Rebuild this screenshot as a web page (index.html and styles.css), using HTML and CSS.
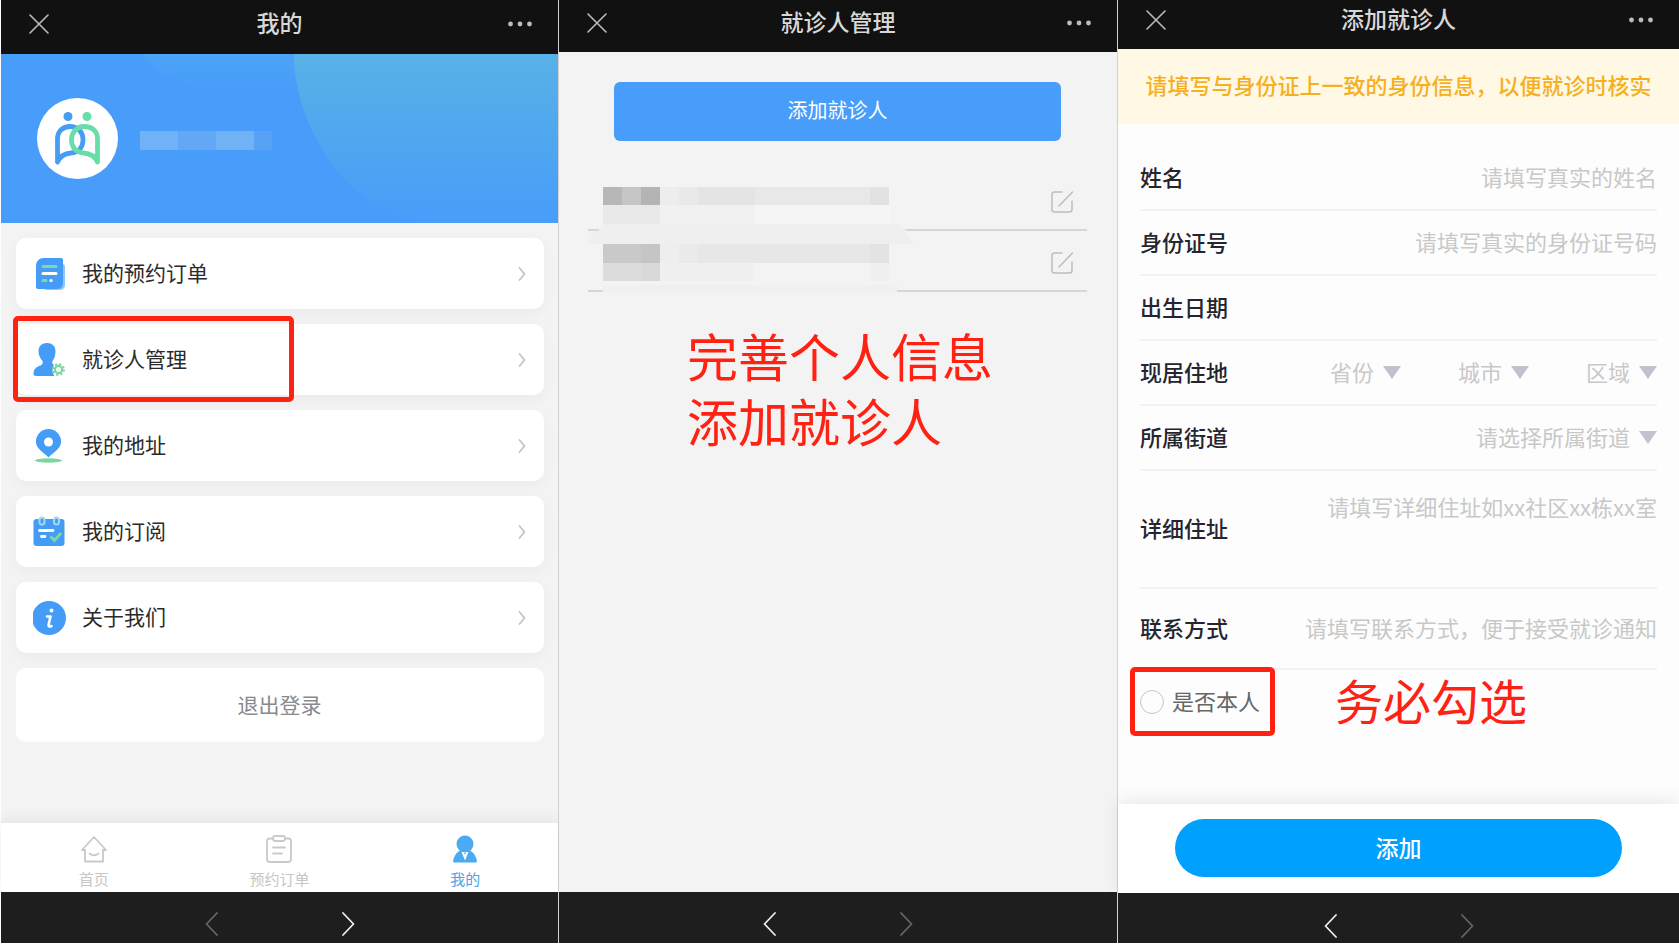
FILE: index.html
```html
<!DOCTYPE html>
<html lang="zh-CN">
<head>
<meta charset="utf-8">
<title>就诊人管理</title>
<link rel="stylesheet" href="styles.css">
</head>
<body>
<svg class="defs" aria-hidden="true">
  <symbol id="close" viewBox="0 0 20 20"><path d="M1 1 19 19M19 1 1 19" fill="none" stroke="currentColor" stroke-width="1.6" stroke-linecap="round"/></symbol>
  <symbol id="dots" viewBox="0 0 24 6"><circle cx="2.5" cy="3" r="2.4"/><circle cx="12" cy="3" r="2.4"/><circle cx="21.5" cy="3" r="2.4"/></symbol>
  <symbol id="prev" viewBox="0 0 13 24"><path d="M12 1 1.500 12 12 23" fill="none" stroke="currentColor" stroke-width="1.8" stroke-linecap="round" stroke-linejoin="round"/></symbol>
  <symbol id="next" viewBox="0 0 13 24"><path d="M1 1 11.500 12 1 23" fill="none" stroke="currentColor" stroke-width="1.8" stroke-linecap="round" stroke-linejoin="round"/></symbol>
  <symbol id="chev" viewBox="0 0 8 14"><path d="M1.500 1 6.500 7 1.500 13" fill="none" stroke="#c4c4c4" stroke-width="1.8" stroke-linecap="round" stroke-linejoin="round"/></symbol>
  <symbol id="edit" viewBox="0 0 24 24"><path d="M12 2H4.500A2.500 2.500 0 0 0 2 4.500v15A2.500 2.500 0 0 0 4.500 22h15a2.500 2.500 0 0 0 2.500-2.500V11M22.500 2 9 16" fill="none" stroke="#bdbdbd" stroke-width="1.5" stroke-linecap="round"/></symbol>
</svg>
<div class="board">

  <section class="phone phone-me">
    <header class="bar">
      <button class="ghost" aria-label="关闭"><svg class="i-close"><use href="#close"/></svg></button>
      <h1>我的</h1>
      <button class="ghost" aria-label="更多"><svg class="i-dots"><use href="#dots"/></svg></button>
    </header>
    <div class="banner">
      <svg class="banner-art" viewBox="0 0 557 170" preserveAspectRatio="none">
        <defs>
          <linearGradient id="g1" x1="0" y1="0" x2="0" y2="1"><stop offset="0" stop-color="#58b1e6"/><stop offset="1" stop-color="#479df9"/></linearGradient>
          <linearGradient id="g2" x1="0" y1="0" x2="0" y2="1"><stop offset="0" stop-color="#4ca3f7"/><stop offset="1" stop-color="#479df9"/></linearGradient>
        </defs>
        <path d="M142 0H300V38C240 44 160 36 142 0Z" fill="url(#g2)"/>
        <path d="M293 0C292 50 322 118 372 150C392 162 410 168 440 170H557V0Z" fill="url(#g1)"/>
      </svg>
      <svg class="avatar" viewBox="0 0 81 81">
        <circle cx="40.500" cy="40.500" r="40.500" fill="#fff"/>
        <g fill="none" stroke-width="4.800" stroke-linejoin="round">
          <path stroke="#479df6" d="M20.500 64V41C20.500 33 26 28.500 33 28.500C41 28.500 46 34 46 42C46 50 41 54.500 34 55C27 55.500 23 58 20.500 64Z"/>
          <path stroke="#68dda5" d="M60.500 64V41C60.500 33 55 28.500 47.500 28.500C40 28.500 34.500 34 34.500 42C34.500 50 40 54.500 46.500 55C53.500 55.500 58 58 60.500 64Z"/>
        </g>
        <circle cx="31" cy="18.500" r="4.500" fill="#479df6"/><circle cx="50" cy="18.500" r="4.500" fill="#68dda5"/>
      </svg>
      <svg class="mask" viewBox="0 0 132 19"><path fill="#71b1f5" d="M0 0h38v19H0z"/><path fill="#62a8f5" d="M38 0h38v19H38z"/><path fill="#70b2f3" d="M76 0h38v19H76z"/><path fill="#57a2f5" d="M114 0h18v19h-18z"/></svg>
    </div>
    <nav class="menu">
      <a class="card" href="#orders">
        <svg class="i-menu" viewBox="0 0 34 34"><path d="M9 7h20q3 0 3 3v18q0 5-6 5H14q-3 0-4-3z" fill="#8cc6fa"/><path d="M11 1h17q2 0 2 2v22q0 7-6 7H5q-2 0-2-2V9.500Q3 1 11 1z" fill="#449cf6"/><path d="M10 9.500h13" stroke="#7bdc9f" stroke-width="3" stroke-linecap="round"/><path d="M10 16.500h13" stroke="#fff" stroke-width="3" stroke-linecap="round"/><path d="M10 23.500h3" stroke="#7bdc9f" stroke-width="3" stroke-linecap="round"/><circle cx="18" cy="23.500" r="1.600" fill="#fff"/></svg>
        <span>我的预约订单</span><svg class="i-chev"><use href="#chev"/></svg>
      </a>
      <a class="card marked" href="#patients">
        <svg class="i-menu" viewBox="0 0 34 34"><path d="M14 0c5 0 8.500 3 8.500 8 0 5-1.500 8-3 10-.8 2 0 3 1.500 4-2 3-2 8 .5 11H3q-2.500 0-2.500-2.500C.500 26 3 24 7.500 22.500q3-1.500 2-4.500C7 15 5.500 12 5.500 8 5.500 3 9 0 14 0z" fill="#449cf6"/><circle cx="25.500" cy="26.500" r="3.600" fill="none" stroke="#7dd6a0" stroke-width="2.200"/><circle cx="25.500" cy="26.500" r="5.400" fill="none" stroke="#7dd6a0" stroke-width="2" stroke-dasharray="2.120 2.120"/></svg>
        <span>就诊人管理</span><svg class="i-chev"><use href="#chev"/></svg>
      </a>
      <a class="card" href="#address">
        <svg class="i-menu" viewBox="0 0 34 34"><ellipse cx="15.500" cy="31.500" rx="13.500" ry="2.200" fill="#7dd6a0"/><path d="M15.500 0a12.600 12.600 0 0 1 12.600 12.600c0 8-9 11.400-12.600 15.900C11.900 24 2.900 20.600 2.900 12.600A12.600 12.600 0 0 1 15.500 0z" fill="#449cf6"/><circle cx="15.500" cy="13" r="4.500" fill="#fff"/></svg>
        <span>我的地址</span><svg class="i-chev"><use href="#chev"/></svg>
      </a>
      <a class="card" href="#subscribe">
        <svg class="i-menu" viewBox="0 0 34 34"><rect x=".5" y="4" width="31" height="27" rx="3" fill="#449cf6"/><rect x="6.500" y="2.500" width="5" height="7" rx="2.500" fill="#449cf6" stroke="#a5d8f2" stroke-width="2"/><rect x="21" y="2.500" width="5" height="7" rx="2.500" fill="#449cf6" stroke="#a5d8f2" stroke-width="2"/><path d="M6.500 15.500H20M8.500 21.500H12" stroke="#fff" stroke-width="2.800" stroke-linecap="round"/><path d="M17.500 21.500l4 4 6.500-7.500" fill="none" stroke="#7bdc9f" stroke-width="2.800"/></svg>
        <span>我的订阅</span><svg class="i-chev"><use href="#chev"/></svg>
      </a>
      <a class="card" href="#about">
        <svg class="i-menu" viewBox="0 0 34 34"><circle cx="16" cy="17" r="17" fill="#449cf6"/><circle cx="18.500" cy="9.500" r="2" fill="#fff"/><path d="M14 15.500H17.500L15.500 24Q15.500 26.500 18.500 25" fill="none" stroke="#fff" stroke-width="2.600" stroke-linecap="round" stroke-linejoin="round"/></svg>
        <span>关于我们</span><svg class="i-chev"><use href="#chev"/></svg>
      </a>
      <button class="card logout">退出登录</button>
    </nav>
    <nav class="tabs">
      <a href="#home"><svg class="i-tab" viewBox="0 0 28 28"><path d="M14 2 2 15h3v11.500h18V15h3zM9.500 18.500q4.500 3.500 9 0" fill="none" stroke="#c9c9c9" stroke-width="1.800" stroke-linecap="round" stroke-linejoin="round"/></svg>首页</a>
      <a href="#booking"><svg class="i-tab" viewBox="0 0 28 28"><g fill="none" stroke="#c9c9c9" stroke-width="1.800" stroke-linecap="round"><path d="M8 3.500H5q-3 0-3 3V24q0 3 3 3h18q3 0 3-3V6.500q0-3-3-3h-3"/><rect x="8" y="1" width="12" height="5" rx="2"/><path d="M8 12.500h12M8 18.500h9"/></g></svg>预约订单</a>
      <a class="on" href="#me"><svg class="i-tab" viewBox="0 0 28 28"><circle cx="14" cy="9" r="8.500" fill="#4aabf3"/><path d="M9 15.500h10q6 3.500 7 11-.2 1-1.500 1h-21Q2 27.500 2 26.500 3 19 9 15.500z" fill="#4aabf3"/><path d="M10.500 17h7L14 25.500z" fill="#fff"/><path d="M13 17.500h2l-1 2.500z" fill="#4aabf3"/></svg>我的</a>
    </nav>
    <footer class="navbar"><button class="ghost dim" aria-label="后退"><svg class="i-nav"><use href="#prev"/></svg></button><button class="ghost" aria-label="前进"><svg class="i-nav"><use href="#next"/></svg></button></footer>
  </section>

  <section class="phone phone-list">
    <header class="bar">
      <button class="ghost" aria-label="关闭"><svg class="i-close"><use href="#close"/></svg></button>
      <h1>就诊人管理</h1>
      <button class="ghost" aria-label="更多"><svg class="i-dots"><use href="#dots"/></svg></button>
    </header>
    <div class="list-body">
      <button class="add">添加就诊人</button>
      <ul class="people">
        <li>
          <svg class="mosaic" viewBox="0 0 330 61"><path fill="#b7b7b7" d="M15 17h19v18H15z"/><path fill="#c6c6c6" d="M34 17h19v18H34z"/><path fill="#b4b4b4" d="M53 17h19v18H53z"/><path fill="#ededed" d="M72 17h19v18H72z"/><path fill="#e9e9e9" d="M91 17h19v18H91z"/><path fill="#e4e4e4" d="M110 17h57v18h-57z"/><path fill="#e8e8e8" d="M167 17h115v18H167z"/><path fill="#e2e2e2" d="M282 17h19v18h-19z"/><path fill="#e9e9e9" d="M15 35h57v19H15z"/><path fill="#f1f1f1" d="M72 35h95v19H72z"/><path fill="#f5f5f5" d="M167 35h135v19H167z"/><path fill="#efefef" d="M15 54h294l10 7H10z"/></svg>
          <button class="ghost" aria-label="编辑"><svg class="i-edit"><use href="#edit"/></svg></button>
        </li>
        <li>
          <svg class="mosaic" viewBox="0 0 330 61"><path fill="#efefef" d="M6 0h310l10 13H0z"/><path fill="#c9c9c9" d="M15 13h38v19H15z"/><path fill="#c5c5c5" d="M53 13h19v19H53z"/><path fill="#eee" d="M72 13h19v19H72z"/><path fill="#eaeaea" d="M91 13h19v19H91z"/><path fill="#e7e7e7" d="M110 13h172v19H110z"/><path fill="#e3e3e3" d="M282 13h19v19h-19z"/><path fill="#dcdcdc" d="M15 32h38v18H15z"/><path fill="#d9d9d9" d="M53 32h19v18H53z"/><path fill="#f0f0f0" d="M72 32h95v18H72z"/><path fill="#f0f0f0" d="M282 32h19v18h-19z"/><path fill="#f0f0f0" d="M15 54h294v7H15z"/></svg>
          <button class="ghost" aria-label="编辑"><svg class="i-edit"><use href="#edit"/></svg></button>
        </li>
      </ul>
      <p class="note">完善个人信息<br>添加就诊人</p>
    </div>
    <footer class="navbar"><button class="ghost" aria-label="后退"><svg class="i-nav"><use href="#prev"/></svg></button><button class="ghost dim" aria-label="前进"><svg class="i-nav"><use href="#next"/></svg></button></footer>
  </section>

  <section class="phone phone-form">
    <header class="bar">
      <button class="ghost" aria-label="关闭"><svg class="i-close"><use href="#close"/></svg></button>
      <h1>添加就诊人</h1>
      <button class="ghost" aria-label="更多"><svg class="i-dots"><use href="#dots"/></svg></button>
    </header>
    <p class="tip">请填写与身份证上一致的身份信息，以便就诊时核实</p>
    <form class="form" id="patient">
      <div class="row"><label for="name">姓名</label><input id="name" type="text" placeholder="请填写真实的姓名"></div>
      <div class="row"><label for="idno">身份证号</label><input id="idno" type="text" placeholder="请填写真实的身份证号码"></div>
      <div class="row"><label for="birth">出生日期</label><input id="birth" type="text"></div>
      <div class="row region"><label for="prov">现居住地</label>
        <span class="pick"><select id="prov"><option>省份</option></select></span>
        <span class="pick"><select aria-label="城市"><option>城市</option></select></span>
        <span class="pick"><select aria-label="区域"><option>区域</option></select></span>
      </div>
      <div class="row"><label for="street">所属街道</label><span class="pick"><select id="street"><option>请选择所属街道</option></select></span></div>
      <div class="row tall"><label for="addr">详细住址</label><textarea id="addr" rows="2" placeholder="请填写详细住址如xx社区xx栋xx室"></textarea></div>
      <div class="row contact"><label for="tel">联系方式</label><input id="tel" type="text" placeholder="请填写联系方式，便于接受就诊通知"></div>
      <div class="self"><label class="self-pick"><input type="radio" name="self"><span>是否本人</span></label><strong class="must">务必勾选</strong></div>
    </form>
    <div class="submit"><button form="patient" type="button">添加</button></div>
    <footer class="navbar"><button class="ghost" aria-label="后退"><svg class="i-nav"><use href="#prev"/></svg></button><button class="ghost dim" aria-label="前进"><svg class="i-nav"><use href="#next"/></svg></button></footer>
  </section>
</div>
</body>
</html>
```
FILE: styles.css
```css
*, *::after { box-sizing: border-box; }
body, h1, p, ul { margin: 0; padding: 0; }
body {
  background: #fff;
  font-family: "Noto Sans CJK SC", "Noto Sans", sans-serif;
  font-size: 22px;
  line-height: 32px;
}
button, input, select, textarea { font: inherit; color: inherit; margin: 0; padding: 0; border: 0; background: none; }
a { color: inherit; text-decoration: none; }
svg { display: block; flex: none; }
.defs { position: absolute; width: 0; height: 0; }
.ghost { display: flex; cursor: pointer; }

.board {
  display: grid;
  grid-template-columns: 558fr 559fr 561fr;
  min-height: 100vh;
  padding: 0 0 2px 1px;
}
.phone { display: flex; flex-direction: column; min-width: 0; background: #f3f3f3; }
.phone-me, .phone-list { border-right: 1px solid #d2d2d2; }
.phone-form { background: #fdfdfd; }

/* title bar */
.bar {
  display: grid;
  grid-template-columns: 1fr auto 1fr;
  align-items: center;
  height: 54px;
  padding: 0 26px 6px;
  background: #111;
  color: #d8d8d8;
}
.phone-list .bar { height: 52px; padding-bottom: 7px; }
.phone-form .bar { height: 49px; padding-bottom: 10px; }
.bar h1 { padding-bottom: 4px; font-size: 23px; line-height: 34px; font-weight: 500; }
.bar .ghost:first-child { padding-left: 2px; }
.bar .ghost:last-child { justify-self: end; }
.i-close { width: 20px; height: 20px; color: #bdbdbd; }
.i-dots { width: 24px; height: 6px; fill: #bdbdbd; }

/* browser bar */
.navbar {
  display: flex;
  justify-content: center;
  gap: 124px;
  height: 51px;
  padding-top: 20px;
  background: #1e1e1e;
  color: #eee;
}
.i-nav { width: 13px; height: 24px; }
.dim { color: #666; }

/* profile */
.banner { position: relative; display: flex; align-items: center; gap: 22px; height: 169px; padding: 0 36px; background: #479df9; }
.banner-art { position: absolute; inset: 0; width: 100%; height: 100%; }
.avatar { position: relative; width: 81px; height: 81px; }
.mask { position: relative; width: 132px; height: 19px; margin-top: 4px; }
.menu { display: flex; flex-direction: column; gap: 15px; flex: 1; padding: 15px 14px 15px 15px; }
.card {
  position: relative;
  display: flex;
  align-items: center;
  gap: 15px;
  height: 71px;
  padding: 0 18px 0 17px;
  border-radius: 10px;
  background: #fff;
  color: #2b2b2b;
  font-size: 21px;
  box-shadow: 0 4px 14px rgba(0, 0, 0, .04);
}
.card span { flex: 1; padding-bottom: 3px; }
.marked::after { content: ""; position: absolute; left: -3px; top: -8px; width: 281px; height: 86px; border: 5px solid #ff2213; border-radius: 5px; }
.i-menu { width: 34px; height: 34px; }
.i-chev { width: 8px; height: 14px; }
.logout { justify-content: center; width: 100%; height: 74px; padding-bottom: 3px; color: #88888e; box-shadow: none; }
.tabs {
  display: grid;
  grid-template-columns: repeat(3, 1fr);
  height: 69px;
  padding-top: 12px;
  background: #fff;
  color: #c6c6c6;
  font-size: 15px;
  line-height: 20px;
  box-shadow: 0 -3px 12px rgba(0, 0, 0, .07);
}
.tabs a { display: flex; flex-direction: column; align-items: center; gap: 6px; }
.tabs .on { color: #4aa2ea; }
.i-tab { width: 28px; height: 28px; }

/* patient list */
.list-body { flex: 1; padding: 30px 30px 0 29px; }
.add { display: block; width: calc(100% - 52px); height: 59px; margin: 0 auto 29px; padding-bottom: 3px; border-radius: 6px; background: #479df9; color: #fff; font-size: 20px; }
.people { list-style: none; }
.people li { display: flex; justify-content: space-between; align-items: center; height: 61px; padding-right: 13px; border-bottom: 2px solid #d6d6d6; }
.people .ghost { padding-top: 4px; }
.mosaic { position: relative; align-self: flex-start; width: 330px; height: 61px; }
.i-edit { width: 24px; height: 24px; }
.note { padding: 31px 0 0 99px; color: #ff2213; font-size: 51px; line-height: 65px; }

/* patient form */
.tip { height: 75px; padding-top: 19px; background: #fff8e5; color: #f6b01f; font-weight: 500; text-align: center; white-space: nowrap; }
.form { flex: 1; padding: 22px 22px 0; }
.row { display: flex; align-items: center; justify-content: space-between; min-height: 65px; border-bottom: 2px solid #f2f2f2; }
.row label { padding-bottom: 4px; color: #25252f; font-weight: 500; white-space: nowrap; }
.row input, .row textarea { flex: 1; min-width: 0; text-align: right; resize: none; outline: 0; }
.row input, .pick select { padding-bottom: 4px; }
.row textarea { height: 78px; overflow: hidden; }
::placeholder { color: #c8c8c8; opacity: 1; }
.pick { display: flex; align-items: center; gap: 8px; color: #c8c8c8; }
.pick select { appearance: none; }
.pick::after { content: ""; width: 18px; height: 13px; background: #c0c2cc; clip-path: polygon(0 0, 100% 0, 50% 100%); }
.region { gap: 57px; justify-content: flex-end; }
.region label { margin-right: auto; }
.tall { min-height: 118px; }
.contact { min-height: 81px; }
.self { display: flex; align-items: center; gap: 60px; margin: -3px 0 0 -10px; }
.self-pick { display: flex; align-items: center; gap: 8px; height: 69px; padding: 0 10px 0 5px; border: 5px solid #ff2213; border-radius: 5px; color: #666; }
.self-pick span { padding-bottom: 3px; }
.self-pick input { appearance: none; width: 24px; height: 24px; border: 1px solid #c4c4c4; border-radius: 50%; }
.must { padding-bottom: 6px; color: #ff2213; font-size: 48px; line-height: 60px; font-weight: 400; }
.submit { padding: 15px 57px 16px; background: #fff; box-shadow: 0 -4px 16px rgba(0, 0, 0, .08); }
.submit button { display: block; width: 100%; height: 58px; padding-bottom: 3px; border-radius: 29px; background: #00a0ff; color: #fff; font-size: 23px; font-weight: 500; }
.phone-form .navbar { height: 50px; padding-top: 21px; }
```
